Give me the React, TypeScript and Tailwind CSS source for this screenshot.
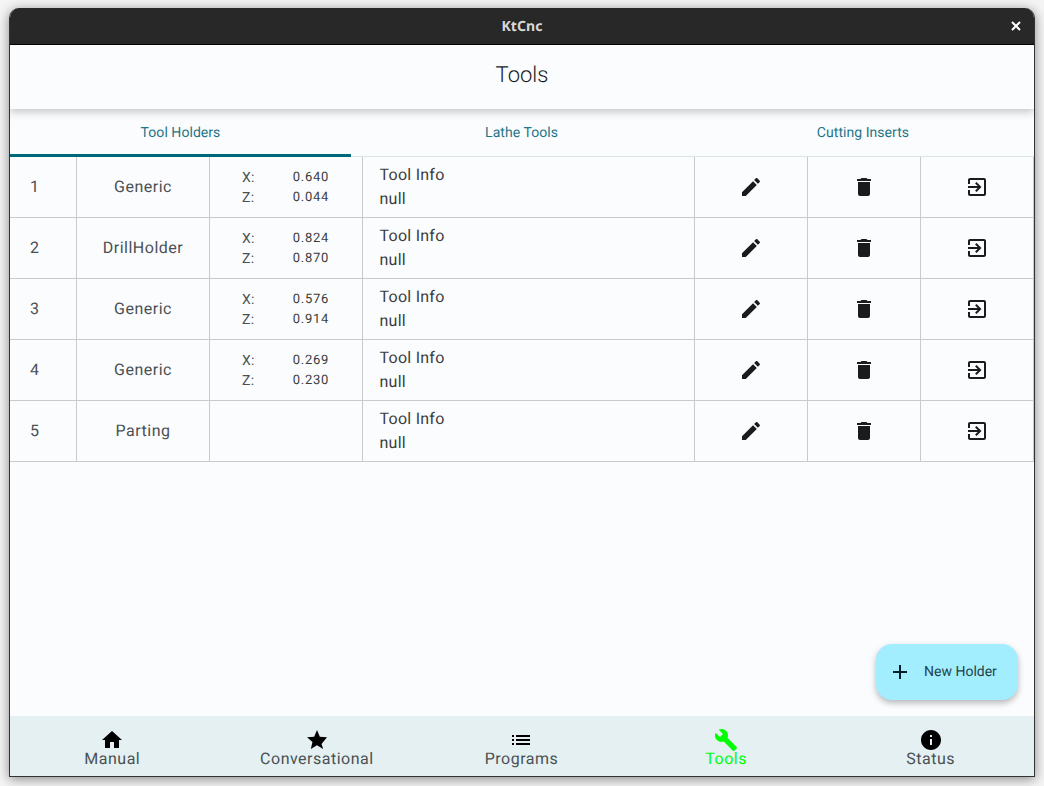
import React from 'react';

const tools = [
  { id: 1, name: 'Generic', x: '0.640', z: '0.044' },
  { id: 2, name: 'DrillHolder', x: '0.824', z: '0.870' },
  { id: 3, name: 'Generic', x: '0.576', z: '0.914' },
  { id: 4, name: 'Generic', x: '0.269', z: '0.230' },
  { id: 5, name: 'Parting' },
];

const paths = {
  edit: 'M3 17.25V21h3.75L17.81 9.94l-3.75-3.75L3 17.25zM20.71 7.04c.39-.39.39-1.02 0-1.41l-2.34-2.34c-.39-.39-1.02-.39-1.41 0l-1.83 1.83 3.75 3.75 1.83-1.83z',
  trash: 'M6 19c0 1.1.9 2 2 2h8c1.1 0 2-.9 2-2V7H6v12zM19 4h-3.5l-1-1h-5l-1 1H5v2h14V4z',
  load: 'M10.09 15.59L11.5 17l5-5-5-5-1.41 1.41L12.67 11H3v2h9.67l-2.58 2.59zM19 3H5c-1.11 0-2 .9-2 2v4h2V5h14v14H5v-4H3v4c0 1.1.89 2 2 2h14c1.1 0 2-.9 2-2V5c0-1.1-.9-2-2-2z',
  home: 'M10 20v-6h4v6h5v-8h3L12 3 2 12h3v8z',
  star: 'M12 17.27L18.18 21l-1.64-5.03L22 9.24l-7.19-.61L12 2 9.19 8.63 2 9.24l5.46 4.73L5.82 21z',
  list: 'M3 13h2v-2H3v2zm0 4h2v-2H3v2zm0-8h2V7H3v2zm4 4h14v-2H7v2zm0 4h14v-2H7v2zM7 7v2h14V7H7z',
  build: 'M22.7 19l-9.1-9.1c.9-2.3.4-5-1.5-6.9-2-2-5-2.4-7.4-1.3L9 6 6 9 1.6 4.7C.4 7.1.9 10.1 2.9 12.1c1.9 1.9 4.6 2.4 6.9 1.5l9.1 9.1c.4.4 1 .4 1.4 0l2.3-2.3c.5-.4.5-1.1.1-1.4z',
  info: 'M12 2C6.48 2 2 6.48 2 12s4.48 10 10 10 10-4.48 10-10S17.52 2 12 2zm1 15h-2v-6h2v6zm0-8h-2V7h2v2z',
  add: 'M19 13h-6v6h-2v-6H5v-2h6V5h2v6h6v2z',
};

function Icon({ d, className }: { d: string; className?: string }) {
  return (
    <svg viewBox="0 0 24 24" fill="currentColor" className={className ?? 'h-6 w-6'}>
      <path d={d} />
    </svg>
  );
}

const navItems = [
  { label: 'Manual', icon: paths.home },
  { label: 'Conversational', icon: paths.star },
  { label: 'Programs', icon: paths.list },
  { label: 'Tools', icon: paths.build, active: true },
  { label: 'Status', icon: paths.info },
];

export default function App() {
  return (
    <div className="h-[786px] w-[1044px] overflow-hidden bg-[#f4f4f4] pl-[9px] pt-2 font-['Roboto',sans-serif] [text-rendering:geometricPrecision]">
      <div className="relative flex h-[769px] w-[1026px] flex-col overflow-hidden rounded-t-[10px] border-x border-b border-[#333333] bg-[#fbfcfe] shadow-[0_2px_12px_rgba(0,0,0,0.45)]">
        <div className="relative flex h-[37px] shrink-0 items-center justify-center border-b border-black bg-[#282828]">
          <span className="text-[14px] font-bold tracking-[0.1px] text-[#d8d8d8] font-['Noto_Sans',sans-serif]">KtCnc</span>
          <svg viewBox="0 0 10 10" className="absolute right-[13px] top-[13px] h-[10px] w-[10px] text-white" stroke="currentColor" strokeWidth="2">
            <path d="M1 1l8 8M9 1l-8 8" />
          </svg>
        </div>

        <div className="relative z-10 flex h-[64px] shrink-0 items-center justify-center bg-[#fbfcfe] pb-[3px] shadow-[0_3px_8px_rgba(0,0,0,0.22)]">
          <h1 className="text-[22px] font-light leading-7 text-[#191c1d]">Tools</h1>
        </div>

        <div className="flex h-[48px] shrink-0 border-b border-[#dbe4e6] pt-[2px] text-[14px] tracking-[0.05px] text-[#1f7686]">
          <div className="relative flex w-[341px] items-center justify-center">
            Tool Holders
            <div className="absolute -bottom-px left-0 right-0 h-[3px] bg-[#006878]" />
          </div>
          <div className="flex w-[341px] items-center justify-center">Lathe Tools</div>
          <div className="flex w-[342px] items-center justify-center">Cutting Inserts</div>
        </div>

        <div className="flex flex-col text-[#4a5052]">
          {tools.map((t) => (
            <div key={t.id} className="flex h-[61px] border-b border-[#c8cacb] text-[16px] tracking-[0.5px]">
              <div className="flex w-[67px] shrink-0 items-center border-r border-[#c8cacb] pl-5">{t.id}</div>
              <div className="flex w-[133px] shrink-0 items-center justify-center border-r border-[#c8cacb]">{t.name}</div>
              <div className="flex w-[153px] shrink-0 flex-col justify-center border-r border-[#c8cacb] pl-8 pr-[33px] pt-[2px] text-[14px] leading-5 tracking-[0.25px]">
                {t.x && (
                  <>
                    <div className="flex justify-between"><span>X:</span><span className="text-[13px] tracking-[0.7px] text-[#3a3d3f]">{t.x}</span></div>
                    <div className="flex justify-between"><span>Z:</span><span className="text-[13px] tracking-[0.7px] text-[#3a3d3f]">{t.z}</span></div>
                  </>
                )}
              </div>
              <div className="flex w-[332px] shrink-0 flex-col justify-center border-r border-[#c8cacb] pl-[16.5px] leading-6 tracking-[0.25px] text-[#3a3d3f]">
                <div>Tool Info</div>
                <div>null</div>
              </div>
              {[paths.edit, paths.trash, paths.load].map((d, i) => (
                <div key={i} className="flex w-[113px] shrink-0 items-center justify-center border-r border-[#c8cacb] text-[#191c1d]">
                  <Icon d={d} />
                </div>
              ))}
            </div>
          ))}
        </div>

        <div className="flex-1" />

        <div className="absolute bottom-[76px] right-4 flex h-14 w-[142px] items-center gap-3 rounded-2xl bg-[#a2eeff] pl-3 text-[14px] text-[#24424a] shadow-[0_3px_6px_rgba(0,0,0,0.28)]">
          <Icon d={paths.add} className="h-6 w-6 text-[#001f26]" />
          <span className="pt-[1px]">New Holder</span>
        </div>

        <div className="flex h-[60px] shrink-0 bg-[#e4f0f2] pr-[1px]">
          {navItems.map((n) => (
            <div key={n.label} className="flex flex-1 flex-col items-center pt-[12px]">
              <div className={n.active ? 'text-[#00ff00]' : 'text-black'}>
                <Icon d={n.icon} />
              </div>
              <div className={`-mt-[3px] text-[16px] leading-5 tracking-[0.5px] ${n.active ? 'text-[#00ff00]' : 'text-[#4a5052]'}`}>{n.label}</div>
            </div>
          ))}
        </div>
      </div>
    </div>
  );
}
